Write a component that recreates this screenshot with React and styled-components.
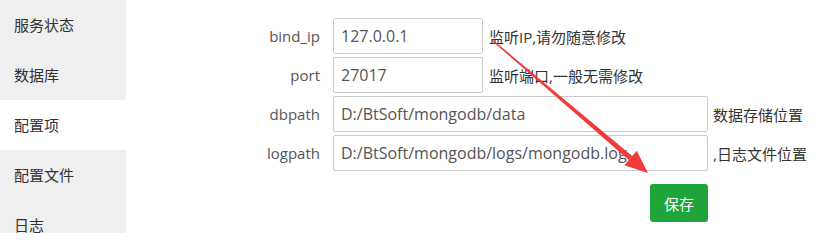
import React from "react"
import styled, {createGlobalStyle} from "styled-components"

const GlobalStyle = createGlobalStyle`
  html, body {
    margin: 0;
    padding: 0;
    background: #fff;
  }
  body {
    font-family: "Open Sans", "Noto Sans CJK SC", sans-serif;
    overflow: hidden;
  }
`

const Page = styled.div`
  position: relative;
  display: flex;
  width: 829px;
  height: 233px;
  overflow: hidden;
`
const Sidebar = styled.ul`
  list-style: none;
  margin: 0;
  padding: 0;
  width: 126px;
  flex-shrink: 0;
  background: #efefef;
`
const NavItem = styled.li`
  height: 50px;
  line-height: 50px;
  padding-left: 14px;
  font-size: 15px;
  color: #333;
  background: ${({active}) => active ? "#fff" : "transparent"};
  cursor: pointer;
`
const Content = styled.div`
  flex-grow: 1;
  padding-top: 18px;
`
const Form = styled.div`
  display: flex;
  flex-direction: column;
  gap: 3px;
`
const Row = styled.div`
  display: flex;
  align-items: center;
`
const Label = styled.label`
  width: 207px;
  padding-right: 13px;
  box-sizing: border-box;
  text-align: right;
  font-size: 15px;
  color: #555;
`
const TextInput = styled.input`
  box-sizing: border-box;
  width: ${({wide}) => wide ? "375px" : "150px"};
  height: 36px;
  padding: 0 7px;
  border: 1px solid #ccc;
  border-radius: 2px;
  font-family: inherit;
  font-size: 16px;
  color: #555;
  outline: none;
`
const Note = styled.span`
  margin-left: ${({wide}) => wide ? "5px" : "6px"};
  font-size: 15px;
  color: #333;
  white-space: nowrap;
`
const Actions = styled.div`
  display: flex;
  justify-content: flex-end;
  width: 375px;
  margin-left: 207px;
  margin-top: 13px;
`
const SaveButton = styled.button`
  width: 58px;
  height: 38px;
  border: none;
  border-radius: 3px;
  background: #20a53a;
  color: #fff;
  font-family: inherit;
  font-size: 15px;
  cursor: pointer;
`
const Overlay = styled.svg`
  position: absolute;
  left: 0;
  top: 0;
  pointer-events: none;
`

const navItems = ["服务状态", "数据库", "配置项", "配置文件", "日志"]

const fields = [
  {name: "bind_ip", value: "127.0.0.1", note: "监听IP,请勿随意修改"},
  {name: "port", value: "27017", note: "监听端口,一般无需修改"},
  {name: "dbpath", value: "D:/BtSoft/mongodb/data", note: "数据存储位置", wide: true},
  {name: "logpath", value: "D:/BtSoft/mongodb/logs/mongodb.log", note: ",日志文件位置", wide: true},
]

// red annotation arrow: thin tail, thicker toward the head
const Arrow = () => {
  const sx = 492, sy = 40, tx = 648, ty = 173
  const dx = tx - sx, dy = ty - sy
  const len = Math.hypot(dx, dy)
  const ux = dx / len, uy = dy / len
  const px = -uy, py = ux
  const bx = tx - ux * 23, by = ty - uy * 23
  const w0 = 0.6, w1 = 2.6, hw = 9.5
  const shaft = [
    [sx + px * w0, sy + py * w0],
    [bx + px * w1, by + py * w1],
    [bx - px * w1, by - py * w1],
    [sx - px * w0, sy - py * w0],
  ]
  const head = [
    [bx + px * hw, by + py * hw],
    [tx, ty],
    [bx - px * hw, by - py * hw],
  ]
  const pts = (a) => a.map(([x, y]) => `${x.toFixed(1)},${y.toFixed(1)}`).join(" ")
  return (
    <Overlay width="829" height="233" viewBox="0 0 829 233">
      <polygon points={pts(shaft)} fill="#f23a3a" />
      <polygon points={pts(head)} fill="#f23a3a" />
    </Overlay>
  )
}

export default function App() {
  return (
    <Page>
      <GlobalStyle />
      <Sidebar>
        {navItems.map((item) => (
          <NavItem key={item} active={item === "配置项"}>{item}</NavItem>
        ))}
      </Sidebar>
      <Content>
        <Form>
          {fields.map((f) => (
            <Row key={f.name}>
              <Label>{f.name}</Label>
              <TextInput wide={f.wide} defaultValue={f.value} />
              <Note wide={f.wide}>{f.note}</Note>
            </Row>
          ))}
        </Form>
        <Actions>
          <SaveButton>保存</SaveButton>
        </Actions>
      </Content>
      <Arrow />
    </Page>
  )
}
